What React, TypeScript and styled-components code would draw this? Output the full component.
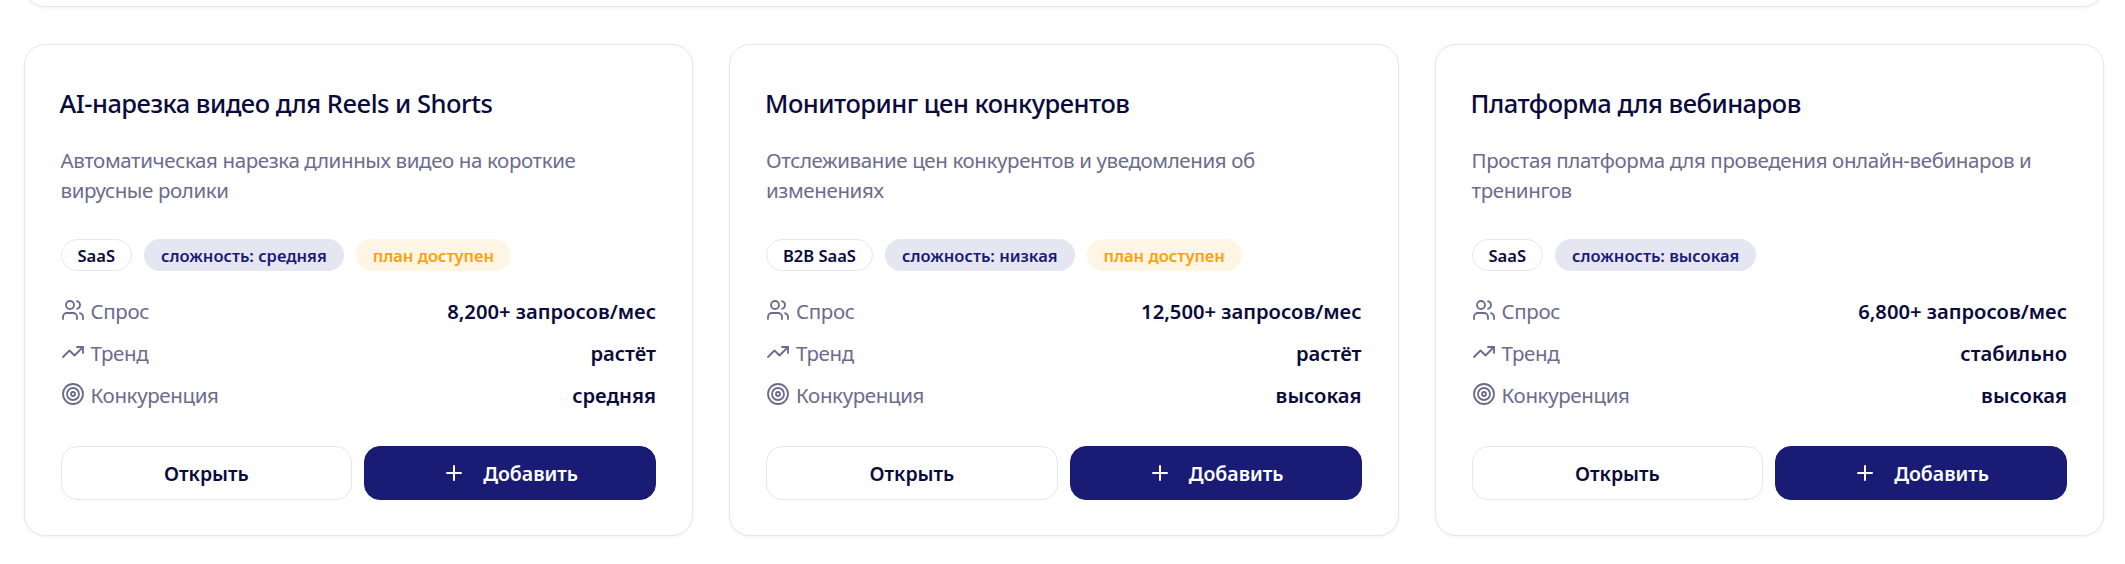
import React from "react";
import styled, { createGlobalStyle } from "styled-components";
import { Users, TrendingUp, Target, Plus } from "lucide-react";

const Global = createGlobalStyle`
  html, body { margin: 0; padding: 0; background: #ffffff; }
  html { height: 564px; overflow: hidden; }
  body { font-family: "Noto Sans", "Open Sans", sans-serif; width: 2125px; height: 564px; overflow: hidden; }
`;

const Page = styled.div`
  display: flex;
  flex-direction: column;
  gap: 37px;
  padding: 0 21px 0 23.5px;
  margin-top: -40px;
`;

const TopPanel = styled.div`
  height: 47px;
  background: #fff;
  border: 1px solid #e6e6f2;
  border-radius: 21px;
  box-sizing: border-box;
  box-shadow: 0 1px 3px rgba(26, 27, 117, 0.06);
`;

const Grid = styled.div`
  display: grid;
  grid-template-columns: repeat(3, 1fr);
  gap: 36px;
`;

const Card = styled.article`
  box-sizing: border-box;
  height: 492px;
  padding: 36px 36px 35px;
  display: flex;
  flex-direction: column;
  background: #fff;
  border: 1px solid #e6e6f2;
  border-radius: 21px;
  box-shadow: 0 1px 3px rgba(26, 27, 117, 0.06);
`;

const Title = styled.h3`
  margin: -2px 0 18px -1px;
  font-size: 25.5px;
  line-height: 48px;
  font-weight: 500;
  letter-spacing: -0.5px;
  white-space: nowrap;
  color: #0a0a3c;
`;

const Description = styled.p`
  margin: 0 0 34px;
  font-size: 20.5px;
  line-height: 30px;
  letter-spacing: -0.38px;
  white-space: nowrap;
  color: #6b6b8e;
`;

const Tags = styled.div`
  display: flex;
  gap: 12px;
  margin-bottom: 25px;
`;

const Tag = styled.span<{ $kind: "outline" | "level" | "plan" }>`
  box-sizing: border-box;
  height: 32px;
  display: inline-flex;
  align-items: center;
  padding: 0 16px;
  border-radius: 16px;
  font-size: 16.5px;
  font-weight: 600;
  white-space: nowrap;
  border: 1px solid ${(p) => (p.$kind === "outline" ? "#e6e6f2" : "transparent")};
  background: ${(p) => (p.$kind === "outline" ? "#fff" : p.$kind === "level" ? "#e6e6f2" : "#fff5e5")};
  color: ${(p) => (p.$kind === "outline" ? "#0a0a3c" : p.$kind === "level" ? "#1a1b75" : "#ff9f0a")};
`;

const Stats = styled.div`
  display: flex;
  flex-direction: column;
  gap: 12px;
`;

const Stat = styled.div`
  display: flex;
  align-items: center;
  justify-content: space-between;
  height: 30px;
`;

const StatLabel = styled.span`
  display: inline-flex;
  align-items: center;
  gap: 6px;
  font-size: 20.5px;
  letter-spacing: -0.35px;
  color: #6b6b8e;

  svg {
    margin-top: -2px;
  }
`;

const StatValue = styled.span`
  font-size: 20.2px;
  font-weight: 600;
  color: #0a0a3c;
`;

const Actions = styled.div`
  display: grid;
  grid-template-columns: 1fr 1fr;
  gap: 12px;
  margin-top: auto;
`;

const Button = styled.button<{ $primary?: boolean }>`
  box-sizing: border-box;
  height: 54px;
  display: flex;
  align-items: center;
  justify-content: center;
  gap: 17px;
  font-family: inherit;
  font-size: 19.5px;
  font-weight: 600;
  border-radius: 16px;
  border: 1px solid ${(p) => (p.$primary ? "#1a1b75" : "#e6e6f2")};
  background: ${(p) => (p.$primary ? "#1a1b75" : "#fff")};
  color: ${(p) => (p.$primary ? "#fff" : "#0a0a3c")};
`;

type Item = {
  title: string;
  desc: string[];
  category: string;
  level: string;
  plan: boolean;
  demand: string;
  trend: string;
  competition: string;
};

const items: Item[] = [
  {
    title: "AI-нарезка видео для Reels и Shorts",
    desc: ["Автоматическая нарезка длинных видео на короткие", "вирусные ролики"],
    category: "SaaS",
    level: "сложность: средняя",
    plan: true,
    demand: "8,200+ запросов/мес",
    trend: "растёт",
    competition: "средняя",
  },
  {
    title: "Мониторинг цен конкурентов",
    desc: ["Отслеживание цен конкурентов и уведомления об", "изменениях"],
    category: "B2B SaaS",
    level: "сложность: низкая",
    plan: true,
    demand: "12,500+ запросов/мес",
    trend: "растёт",
    competition: "высокая",
  },
  {
    title: "Платформа для вебинаров",
    desc: ["Простая платформа для проведения онлайн-вебинаров и", "тренингов"],
    category: "SaaS",
    level: "сложность: высокая",
    plan: false,
    demand: "6,800+ запросов/мес",
    trend: "стабильно",
    competition: "высокая",
  },
];

export default function App() {
  return (
    <>
      <Global />
      <Page>
        <TopPanel />
        <Grid>
          {items.map((it) => (
            <Card key={it.title}>
              <Title>{it.title}</Title>
              <Description>
                {it.desc[0]}
                <br />
                {it.desc[1]}
              </Description>
              <Tags>
                <Tag $kind="outline">{it.category}</Tag>
                <Tag $kind="level">{it.level}</Tag>
                {it.plan && <Tag $kind="plan">план доступен</Tag>}
              </Tags>
              <Stats>
                <Stat>
                  <StatLabel><Users size={24} strokeWidth={1.8} />Спрос</StatLabel>
                  <StatValue>{it.demand}</StatValue>
                </Stat>
                <Stat>
                  <StatLabel><TrendingUp size={24} strokeWidth={1.8} />Тренд</StatLabel>
                  <StatValue>{it.trend}</StatValue>
                </Stat>
                <Stat>
                  <StatLabel><Target size={24} strokeWidth={1.8} />Конкуренция</StatLabel>
                  <StatValue>{it.competition}</StatValue>
                </Stat>
              </Stats>
              <Actions>
                <Button>Открыть</Button>
                <Button $primary><Plus size={24} strokeWidth={2} />Добавить</Button>
              </Actions>
            </Card>
          ))}
        </Grid>
      </Page>
    </>
  );
}
